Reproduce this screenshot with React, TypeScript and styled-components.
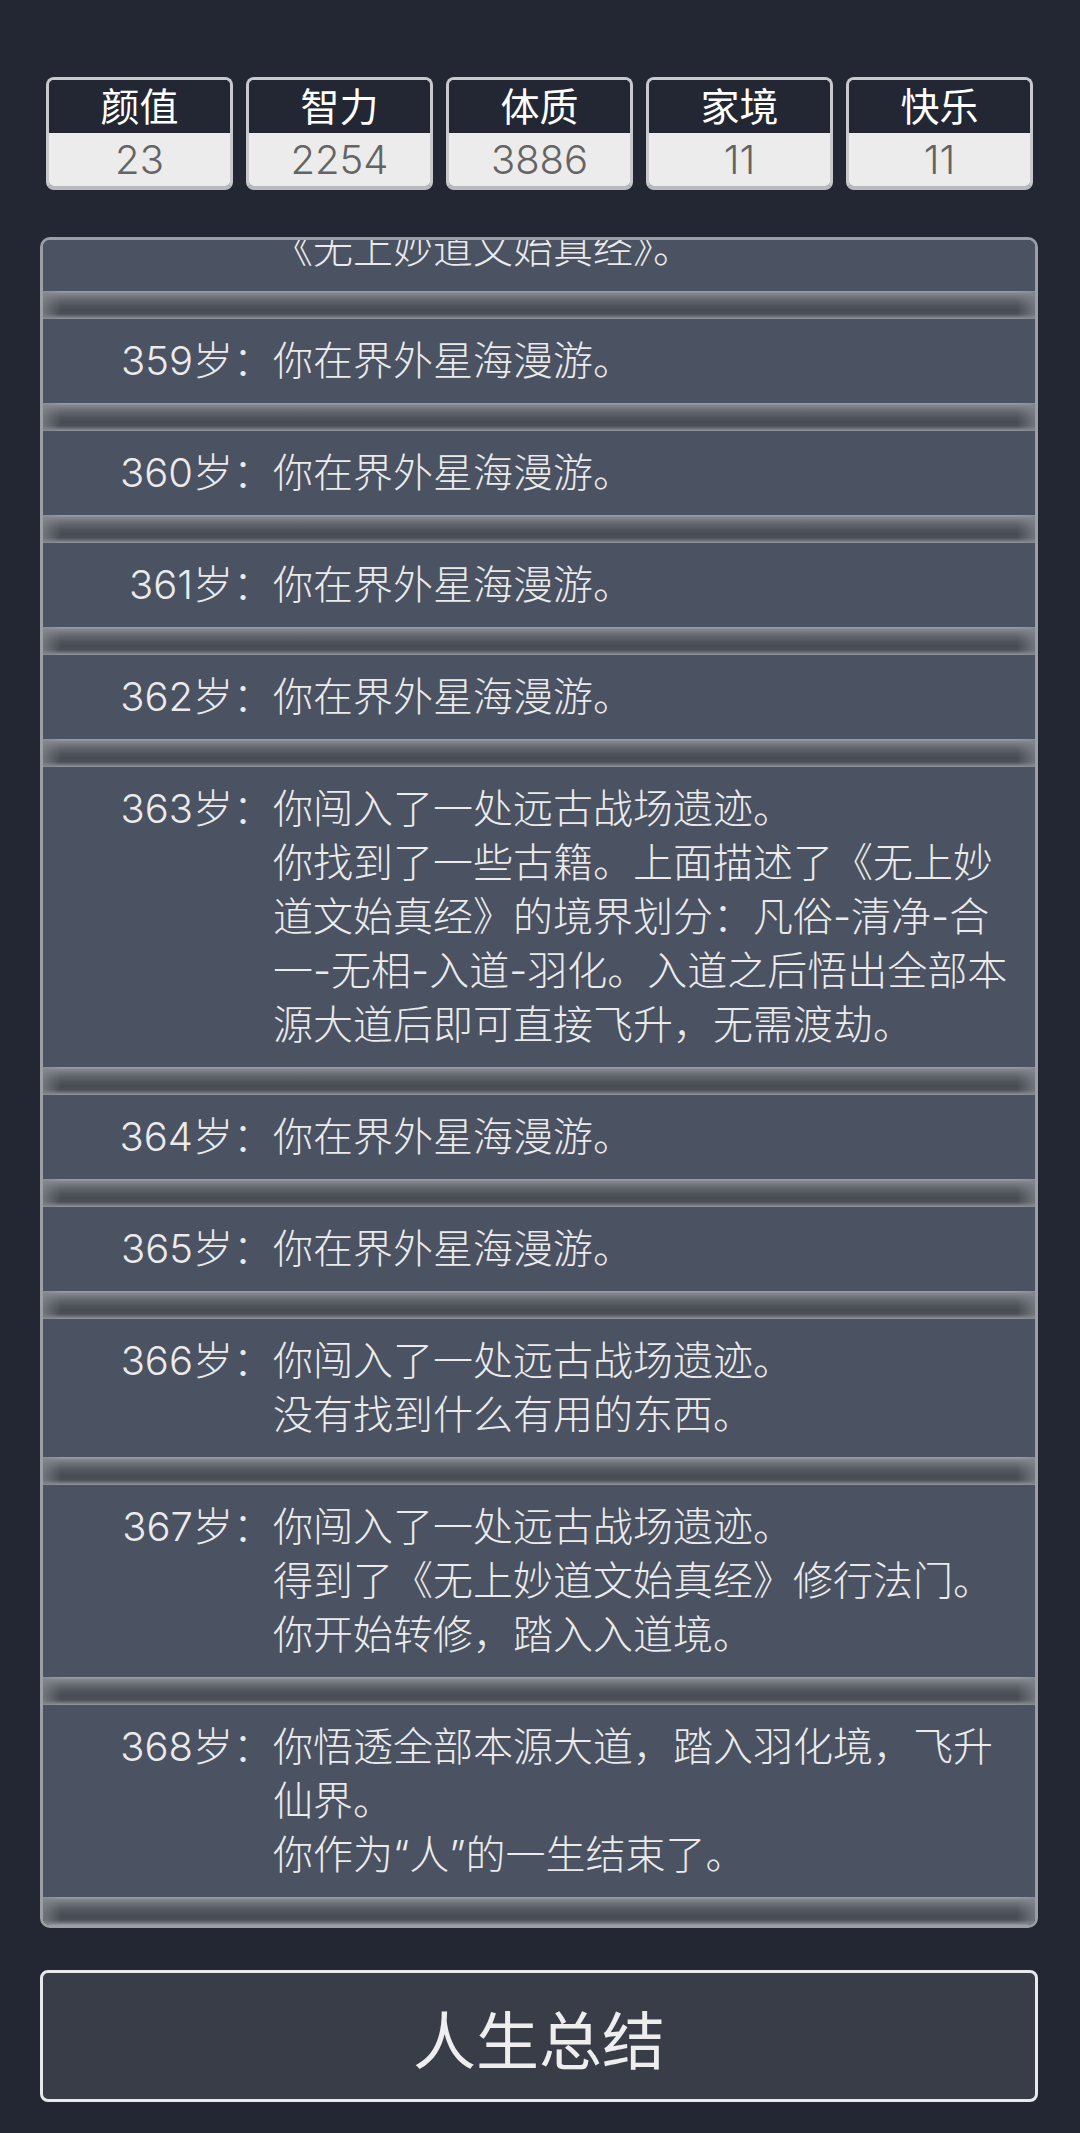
import React, { useLayoutEffect, useRef } from "react";
import styled, { createGlobalStyle } from "styled-components";

const GlobalStyle = createGlobalStyle`
  html, body {
    margin: 0;
    padding: 0;
    background: #222733;
  }
  body {
    font-family: Inter, "Noto Sans CJK SC", sans-serif;
    -webkit-font-smoothing: antialiased;
  }
  * { box-sizing: border-box; }
`;

const Page = styled.div`
  min-height: 100vh;
  background: #222733;
  padding: 77px 42px 30px 40px;
  display: flex;
  flex-direction: column;
`;

const StatsRow = styled.div`
  display: grid;
  grid-template-columns: repeat(5, 1fr);
  gap: 13px;
  padding: 0 5px 0 6px;
`;

const StatBox = styled.div`
  border: 3px solid #c8c9cc;
  border-bottom-width: 4px;
  border-bottom-color: #b9babd;
  border-radius: 8px;
  overflow: hidden;
  display: flex;
  flex-direction: column;
  height: 113px;
`;

const StatLabel = styled.div`
  background: #222733;
  color: #ffffff;
  height: 53px;
  font-size: 39px;
  line-height: 53px;
  text-align: center;
`;

const StatValue = styled.div`
  flex: 1;
  background: #ececec;
  color: #646464;
  font-size: 40px;
  font-weight: 300;
  line-height: 53px;
  text-align: center;
`;

const Panel = styled.div`
  margin-top: 47px;
  height: 1691px;
  border: 3px solid #9b9fa5;
  border-radius: 10px;
  background: #4b5363;
  overflow-y: auto;
  scrollbar-width: none;
  &::-webkit-scrollbar { display: none; }
`;

const List = styled.ul`
  list-style: none;
  margin: 0;
  padding: 0;
`;

const Entry = styled.li`
  display: flex;
  flex-direction: column;
`;

const Row = styled.div`
  display: grid;
  grid-template-columns: 230px 745px;
  padding: 15px 0;
  font-size: 40px;
  font-weight: 300;
  line-height: 54px;
  color: #ebebec;
`;

const Age = styled.div`
  text-align: right;
  white-space: nowrap;
`;

const Content = styled.div`
  display: flex;
  flex-direction: column;
`;

const Line = styled.div`
  line-break: strict;
`;

const Groove = styled.div`
  position: relative;
  height: 28px;
  background: linear-gradient(
    180deg,
    #a0a3a8 0px,
    #868a90 2px,
    #6a6e75 7px,
    #53575f 13px,
    #474b53 19px,
    #4c5058 23px,
    #72767d 26px,
    #989ba1 28px
  );
  &::after {
    content: "";
    position: absolute;
    inset: 0;
    background: linear-gradient(
      90deg,
      rgba(130, 134, 141, 0.7) 0px,
      rgba(130, 134, 141, 0) 18px,
      rgba(130, 134, 141, 0) calc(100% - 18px),
      rgba(130, 134, 141, 0.7) 100%
    );
  }
`;

const SummaryButton = styled.button`
  margin-top: 42px;
  height: 132px;
  width: 100%;
  border: 3px solid #e8e9ec;
  border-radius: 8px;
  background: #393d48;
  color: #eeeeee;
  font-family: Inter, "Noto Sans CJK SC", sans-serif;
  font-size: 63px;
  cursor: pointer;
`;

const stats = [
  { label: "颜值", value: "23" },
  { label: "智力", value: "2254" },
  { label: "体质", value: "3886" },
  { label: "家境", value: "11" },
  { label: "快乐", value: "11" },
];

const roam = ["你在界外星海漫游。"];
const ruins = "你闯入了一处远古战场遗迹。";

const events: { age: number; lines: string[] }[] = [
  { age: 358, lines: ["你得到了一部古籍", "《无上妙道文始真经》。"] },
  { age: 359, lines: roam },
  { age: 360, lines: roam },
  { age: 361, lines: roam },
  { age: 362, lines: roam },
  {
    age: 363,
    lines: [
      ruins,
      "你找到了一些古籍。上面描述了《无上妙道文始真经》的境界划分：凡俗-清净-合一-无相-入道-羽化。入道之后悟出全部本源大道后即可直接飞升，无需渡劫。",
    ],
  },
  { age: 364, lines: roam },
  { age: 365, lines: roam },
  { age: 366, lines: [ruins, "没有找到什么有用的东西。"] },
  {
    age: 367,
    lines: [ruins, "得到了《无上妙道文始真经》修行法门。", "你开始转修，踏入入道境。"],
  },
  {
    age: 368,
    lines: ["你悟透全部本源大道，踏入羽化境，飞升仙界。", "你作为“人”的一生结束了。"],
  },
];

export default function App() {
  const panelRef = useRef<HTMLDivElement>(null);

  useLayoutEffect(() => {
    const el = panelRef.current;
    if (el) el.scrollTop = el.scrollHeight;
  }, []);

  return (
    <>
      <GlobalStyle />
      <Page>
        <StatsRow>
          {stats.map((s) => (
            <StatBox key={s.label}>
              <StatLabel>{s.label}</StatLabel>
              <StatValue>{s.value}</StatValue>
            </StatBox>
          ))}
        </StatsRow>
        <Panel ref={panelRef}>
          <List>
            {events.map((e) => (
              <Entry key={e.age}>
                <Row>
                  <Age>{e.age}岁：</Age>
                  <Content>
                    {e.lines.map((l, i) => (
                      <Line key={i}>{l}</Line>
                    ))}
                  </Content>
                </Row>
                <Groove />
              </Entry>
            ))}
          </List>
        </Panel>
        <SummaryButton>人生总结</SummaryButton>
      </Page>
    </>
  );
}
